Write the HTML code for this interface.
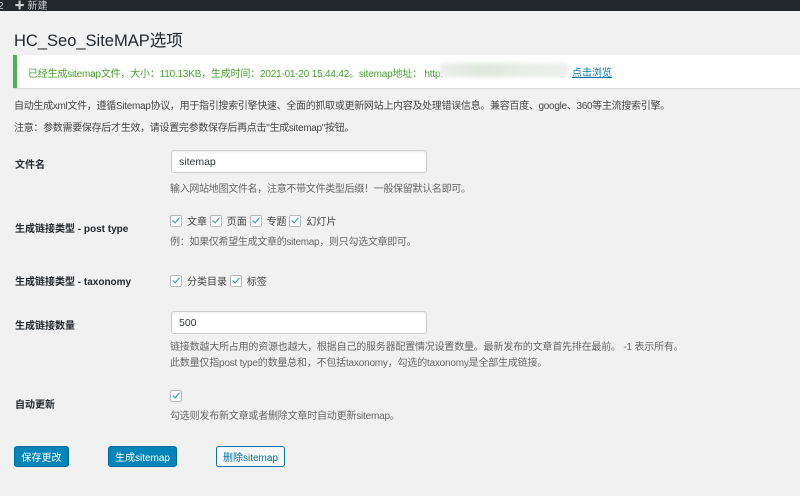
<!DOCTYPE html>
<html><head><meta charset="utf-8"><style>
body{margin:0;width:800px;height:496px;background:#f1f1f1;font-family:"Liberation Sans","Noto Sans CJK SC",sans-serif;font-size:10px;color:#444;position:relative;overflow:hidden}
.a{position:absolute;white-space:nowrap}
.bar{position:absolute;left:0;top:0;width:800px;height:11px;background:#23282d}
.lab{font-weight:bold;color:#23282d;font-size:10px}
.inp{position:absolute;background:#fff;border:1px solid #ccc;border-radius:3px;box-sizing:border-box;height:23px;width:256px;padding:5px 7px;color:#32373c;font-size:10.5px;box-shadow:inset 0 1px 2px rgba(0,0,0,.07)}
.cb{display:inline-block;width:10px;height:10px;border:1px solid #b4b9be;border-radius:2px;background:#fff;vertical-align:-2px;position:relative;margin-right:5px}
.cb:after{content:"";position:absolute;left:3px;top:0px;width:3px;height:6px;border:solid #1e8cbe;border-width:0 1.5px 1.5px 0;transform:rotate(40deg)}
.help{color:#666}
.btn{position:absolute;top:446px;height:21px;box-sizing:border-box;border-radius:3px;font-size:10px;display:flex;align-items:center;justify-content:center;background:#0085ba;color:#fff;border:1px solid #006799}
</style></head><body>
<div class="bar"><span class="a" style="left:-2px;top:-3px;color:#ccc;font-size:10px">2 &nbsp;&nbsp;&nbsp;✚ 新建</span></div>
<div class="a" style="left:14px;top:27px;font-size:16.5px;color:#23282d">HC_Seo_SiteMAP选项</div>
<div class="a" style="left:13px;top:55px;width:787px;height:33px;background:#fff;border-left:4px solid #46b450;box-shadow:0 1px 1px rgba(0,0,0,.1)"></div>
<div class="a" style="left:28px;top:65px;color:#46a02c;font-size:10px;letter-spacing:-0.2px">已经生成sitemap文件，大小：110.13KB，生成时间：2021-01-20 15:44:42。sitemap地址： http:</div>
<div class="a" style="left:440px;top:63px;width:128px;height:14px;background:linear-gradient(90deg,#eee,#dfe8dc,#e8eee6,#eee);filter:blur(2px)"></div>
<div class="a" style="left:572px;top:64px;color:#0073aa;text-decoration:underline">点击浏览</div>
<div class="a" style="left:14px;top:97px;letter-spacing:-0.3px">自动生成xml文件，遵循Sitemap协议，用于指引搜索引擎快速、全面的抓取或更新网站上内容及处理错误信息。兼容百度、google、360等主流搜索引擎。</div>
<div class="a" style="left:14px;top:119px;letter-spacing:-0.3px">注意：参数需要保存后才生效，请设置完参数保存后再点击"生成sitemap"按钮。</div>

<div class="a lab" style="left:15px;top:156px">文件名</div>
<div class="inp" style="left:171px;top:150px">sitemap</div>
<div class="a help" style="left:170px;top:180px;letter-spacing:-0.3px">输入网站地图文件名，注意不带文件类型后缀！一般保留默认名即可。</div>

<div class="a lab" style="left:15px;top:220px">生成链接类型 - post type</div>
<div class="a" style="left:170px;top:213px"><span class="cb"></span>文章 <span class="cb"></span>页面 <span class="cb"></span>专题 <span class="cb"></span>幻灯片</div>
<div class="a help" style="left:170px;top:233px;letter-spacing:-0.3px">例：如果仅希望生成文章的sitemap，则只勾选文章即可。</div>

<div class="a lab" style="left:15px;top:273px">生成链接类型 - taxonomy</div>
<div class="a" style="left:170px;top:273px"><span class="cb"></span>分类目录 <span class="cb"></span>标签</div>

<div class="a lab" style="left:15px;top:317px">生成链接数量</div>
<div class="inp" style="left:171px;top:311px">500</div>
<div class="a help" style="left:170px;top:338px;letter-spacing:-0.2px">链接数越大所占用的资源也越大，根据自己的服务器配置情况设置数量。最新发布的文章首先排在最前。 -1 表示所有。</div>
<div class="a help" style="left:170px;top:354px;letter-spacing:-0.2px">此数量仅指post type的数量总和，不包括taxonomy，勾选的taxonomy是全部生成链接。</div>

<div class="a lab" style="left:15px;top:396px">自动更新</div>
<div class="a" style="left:170px;top:390px"><span class="cb"></span></div>
<div class="a help" style="left:170px;top:407px;letter-spacing:-0.2px">勾选则发布新文章或者删除文章时自动更新sitemap。</div>

<div class="btn" style="left:14px;width:55px">保存更改</div>
<div class="btn" style="left:108px;width:69px">生成sitemap</div>
<div class="btn" style="left:216px;width:69px;background:#f7f7f7;color:#0073aa;border-color:#0073aa">删除sitemap</div>
</body></html>
